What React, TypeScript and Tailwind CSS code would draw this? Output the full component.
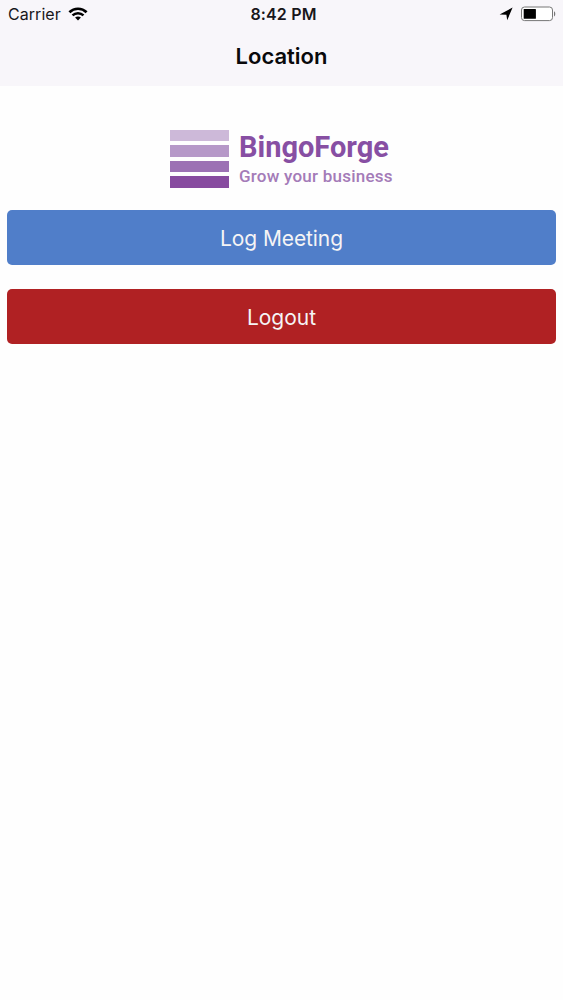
const WifiIcon = () => (
  <svg viewBox="0 0 20 14" className="w-5 h-3.5" fill="none">
    <path d="M1.4 5.2C6.2.6 13.8.6 18.6 5.2" stroke="#000" strokeWidth="2.7" />
    <path d="M4.5 8.3C7.6 5.4 12.4 5.4 15.5 8.3" stroke="#000" strokeWidth="2.5" />
    <path d="M7.1 10.5C8.8 9 11.2 9 12.9 10.5L10 13.4Z" fill="#000" />
  </svg>
);

const LocationArrow = () => (
  <svg viewBox="0 0 14 14" className="w-3.5 h-3.5">
    <path d="M13.6.6 8.2 13.2 7.4 7.8.6 7.4Z" fill="#000" />
  </svg>
);

const BatteryIcon = () => (
  <svg viewBox="0 0 36 16" className="w-9 h-4">
    <rect x="1.5" y="1" width="31" height="13.6" rx="3" fill="#fff" stroke="#777" strokeWidth="1" />
    <rect x="3.7" y="2.9" width="12.2" height="9.8" rx="0.5" fill="#000" />
    <path d="M34 5.2C35.7 6 35.7 9.6 34 10.4Z" fill="#777" />
  </svg>
);

const StatusBar = () => (
  <div className="grid grid-cols-3 items-center h-7 pl-2 pr-[7px] text-[16px] text-[#18171b]">
    <div className="flex items-center gap-[7px]">
      <span className="tracking-[0.05px]">Carrier</span>
      <WifiIcon />
    </div>
    <span className="pl-[3px] text-center font-semibold tracking-[0.15px]">8:42 PM</span>
    <div className="flex items-center justify-end gap-[7px]">
      <LocationArrow />
      <BatteryIcon />
    </div>
  </div>
);

const Logo = () => (
  <div className="flex gap-[10px] pl-[170px] pt-[43px] h-[124px] font-[Roboto,sans-serif]">
    <div className="flex flex-col gap-1 pt-[1px]">
      <div className="w-[59px] h-[11px] bg-[#cdb9d9]" />
      <div className="w-[59px] h-[12px] bg-[#b698c8]" />
      <div className="w-[59px] h-[11px] bg-[#9c71b4]" />
      <div className="w-[59px] h-[12px] bg-[#874b9f]" />
    </div>
    <div className="pt-[1px] whitespace-nowrap">
      <h2 className="text-[29px] leading-[34px] font-bold text-[#874fa3]">BingoForge</h2>
      <p className="text-[17px] leading-6 font-medium tracking-[0.23px] text-[#a47bb8]">
        Grow your business
      </p>
    </div>
  </div>
);

const App = () => {
  return (
    <div className="min-h-screen bg-[#fefefe] font-[Inter,sans-serif]">
      <header className="h-[86px] bg-[#f8f6fa]">
        <StatusBar />
        <h1 className="text-center text-[22px] leading-[57px] font-semibold text-[#09090b]">
          Location
        </h1>
      </header>
      <main>
        <Logo />
        <div className="flex flex-col gap-6 px-[7px] text-[21px] text-[#f5f4f5]">
          <button className="h-[55px] pt-[2px] rounded-[5px] bg-[#507ec9] tracking-[-0.1px]">
            Log Meeting
          </button>
          <button className="h-[55px] pt-[2px] rounded-[5px] bg-[#b02123]">Logout</button>
        </div>
      </main>
    </div>
  );
};

export default App;
